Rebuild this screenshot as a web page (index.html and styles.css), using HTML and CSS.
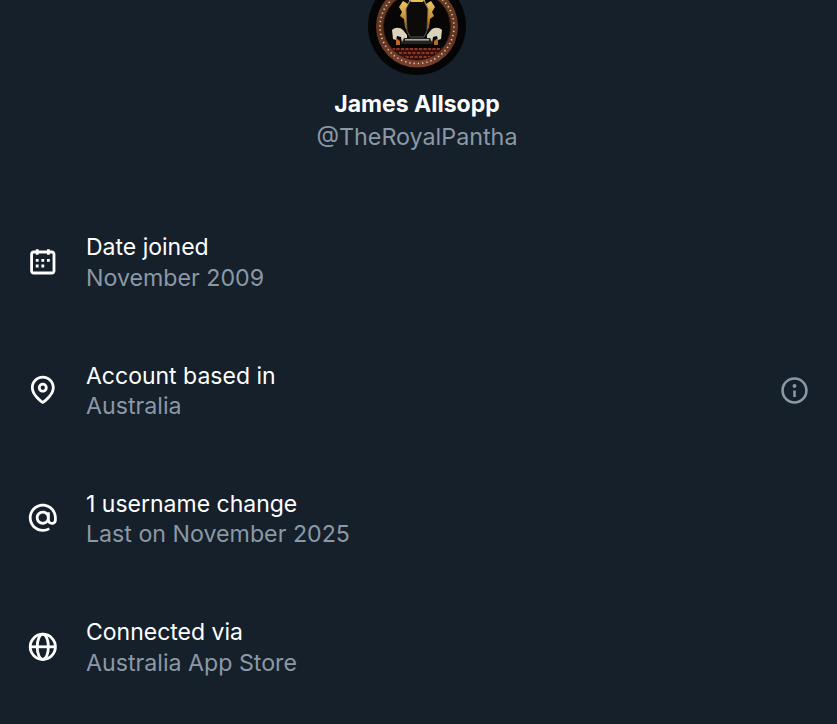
FILE: index.html
```html
<!DOCTYPE html>
<html lang="en">
<head>
<meta charset="utf-8">
<title>About this account</title>
<link rel="stylesheet" href="styles.css">
</head>
<body>
<main class="page">
  <header class="profile">
    <svg class="avatar" viewBox="0 0 98 98" role="img" aria-label="James Allsopp avatar">
      <defs>
        <linearGradient id="rim" x1="0" y1="0" x2="0" y2="1">
          <stop offset="0%" stop-color="#6a3f28"/>
          <stop offset="60%" stop-color="#5f3422"/>
          <stop offset="100%" stop-color="#7a4030"/>
        </linearGradient>
        <linearGradient id="gold" x1="0" y1="0" x2="0" y2="1">
          <stop offset="0%" stop-color="#f0d27a"/>
          <stop offset="60%" stop-color="#c98f2a"/>
          <stop offset="100%" stop-color="#8a3f14"/>
        </linearGradient>
        <clipPath id="inner"><circle cx="49" cy="49.5" r="33"/></clipPath>
      </defs>
      <circle cx="49" cy="49" r="49" fill="#050505"/>
      <circle cx="49" cy="49.5" r="41" fill="url(#rim)"/>
      <circle cx="49" cy="49.5" r="37" fill="none" stroke="#e8c8a0" stroke-width="1.6" stroke-dasharray="1.3 3"/>
      <circle cx="49" cy="49.5" r="33.5" fill="#070605" stroke="#3a1a10" stroke-width="1"/>
      <g clip-path="url(#inner)">
        <path d="M16 71h66v16H16z" fill="#3a0e0a"/>
        <path d="M24 72h50M22 76h54M24 80h50" stroke="#a04a30" stroke-width="1.3" stroke-dasharray="3 1.5"/>
      </g>
      <path d="M31 30l4-6 5 3 2-6h14l2 6 5-3 4 6-3 5 2 4-4 3-1 9-3 3 1-17-4-8H43l-4 8 1 17-3-3-1-9-4-3 2-4z" fill="url(#gold)"/>
      <path d="M42 24h14l4 8-1 22-3 6H42l-3-6-1-22z" fill="#0c0b0a" stroke="#6c6a62" stroke-width=".8"/>
      <path d="M44 17l2 5 3-4 3 4 2-5 1 8H43z" fill="#e6bf55"/>
      <path d="M24 53c3-3 8-3 11 0l4 5v8h-5l-1-6-4-1-1 4-3-1z" fill="#d9d2bd"/>
      <path d="M74 53c-3-3-8-3-11 0l-4 5v8h5l1-6 4-1 1 4 3-1z" fill="#d9d2bd"/>
      <path d="M28 61l4 3v4h-4zM70 61l-4 3v4h4z" fill="#b8692a"/>
      <path d="M36 61h26l3 6H33z" fill="#242220"/>
      <path d="M37 62h24v1.6H37z" fill="#a9a598"/>
    </svg>
    <h1 class="name">James Allsopp</h1>
    <p class="handle">@TheRoyalPantha</p>
  </header>
  <ul class="facts">
    <li class="fact">
      <svg class="icon" viewBox="0 0 24 24"><path d="M7 4V3h2v1h6V3h2v1h1.5C19.89 4 21 5.12 21 6.5v12c0 1.38-1.11 2.5-2.5 2.5h-13C4.12 21 3 19.88 3 18.5v-12C3 5.12 4.12 4 5.5 4H7zm0 2H5.5c-.27 0-.5.22-.5.5v12c0 .28.23.5.5.5h13c.28 0 .5-.22.5-.5v-12c0-.28-.22-.5-.5-.5H17v1h-2V6H9v1H7V6zm0 6h2v-2H7v2zm0 4h2v-2H7v2zm4-4h2v-2h-2v2zm0 4h2v-2h-2v2zm4-4h2v-2h-2v2z"/></svg>
      <div class="copy"><p class="title">Date joined</p><p class="detail">November 2009</p></div>
    </li>
    <li class="fact">
      <svg class="icon" viewBox="0 0 24 24"><path d="M12 7c-1.93 0-3.5 1.57-3.5 3.5S10.07 14 12 14s3.5-1.57 3.5-3.5S13.93 7 12 7zm0 5c-.827 0-1.5-.673-1.5-1.5S11.173 9 12 9s1.5.673 1.5 1.5S12.827 12 12 12zm0-10c-4.687 0-8.5 3.813-8.5 8.5 0 5.967 7.621 11.116 7.945 11.332l.555.37.555-.37c.324-.216 7.945-5.365 7.945-11.332C20.5 5.813 16.687 2 12 2zm0 17.77c-1.665-1.241-6.5-5.196-6.5-9.27C5.5 6.916 8.416 4 12 4s6.5 2.916 6.5 6.5c0 4.073-4.835 8.028-6.5 9.27z"/></svg>
      <div class="copy"><p class="title">Account based in</p><p class="detail">Australia</p></div>
      <svg class="info" viewBox="0 0 24 24"><path d="M13.5 8.5c0 .83-.67 1.5-1.5 1.5s-1.5-.67-1.5-1.5S11.17 7 12 7s1.5.67 1.5 1.5zM13 17v-5h-2v5h2zm-1 5.25c5.66 0 10.25-4.59 10.25-10.25S17.66 1.75 12 1.75 1.75 6.34 1.75 12 6.34 22.25 12 22.25zM20.25 12c0 4.56-3.69 8.25-8.25 8.25S3.75 16.56 3.75 12 7.44 3.75 12 3.75 20.25 7.44 20.25 12z"/></svg>
    </li>
    <li class="fact">
      <svg class="icon" viewBox="0 0 24 24"><path d="M12 4c-4.418 0-8 3.582-8 8s3.582 8 8 8c1.508 0 2.915-.417 4.118-1.14l1.03 1.714C15.643 21.479 13.881 22 12 22 6.477 22 2 17.523 2 12S6.477 2 12 2s10 4.477 10 10v1.5c0 1.933-1.567 3.5-3.5 3.5-1.231 0-2.314-.636-2.938-1.597C14.64 16.36 13.388 17 12 17c-2.761 0-5-2.239-5-5s2.239-5 5-5c1.13 0 2.172.375 3.009 1.008L15 8h2v5.5c0 .828.672 1.5 1.5 1.5s1.5-.672 1.5-1.5V12c0-4.418-3.582-8-8-8zm-3 8c0 1.657 1.343 3 3 3s3-1.343 3-3-1.343-3-3-3-3 1.343-3 3z"/></svg>
      <div class="copy"><p class="title">1 username change</p><p class="detail">Last on November 2025</p></div>
    </li>
    <li class="fact">
      <svg class="icon globe" viewBox="0 0 24 24"><circle cx="12" cy="12" r="9"/><ellipse cx="12" cy="12" rx="4" ry="9"/><path d="M3 12h18"/></svg>
      <div class="copy"><p class="title">Connected via</p><p class="detail">Australia App Store</p></div>
    </li>
  </ul>
</main>
</body>
</html>
```
FILE: styles.css
```css
* { box-sizing: border-box; }
html, body { margin: 0; height: 100%; overflow: hidden; background: #15202b; }
body { font-family: Inter, "Liberation Sans", sans-serif; font-size: 23px; line-height: 30px; color: #fff; }
p, h1, ul { margin: 0; padding: 0; }
.page { display: flex; flex-direction: column; margin-top: -23px; padding-right: 3px; }
.profile { display: flex; flex-direction: column; align-items: center; }
.avatar { width: 98px; height: 98px; display: block; }
.name { font-size: 23px; font-weight: 700; line-height: 30px; margin-top: 14px; }
.handle { color: #8b98a5; margin-top: 3px; font-size: 23.3px; }
.facts { list-style: none; display: flex; flex-direction: column; gap: 67px; margin-top: 80px; padding: 0 26px; }
.fact { display: flex; align-items: center; gap: 26.4px; height: 61.3px; }
.icon { width: 33.6px; height: 33.6px; fill: #fff; flex: none; margin-top: -2px; }
.globe { fill: none; stroke: #fff; stroke-width: 2; }
.copy { flex: 1; display: flex; flex-direction: column; gap: .5px; }
.detail { color: #8b98a5; font-size: 23.2px; }
.info { width: 31px; height: 31px; fill: #8b98a5; flex: none; margin-right: -2px; }
```
